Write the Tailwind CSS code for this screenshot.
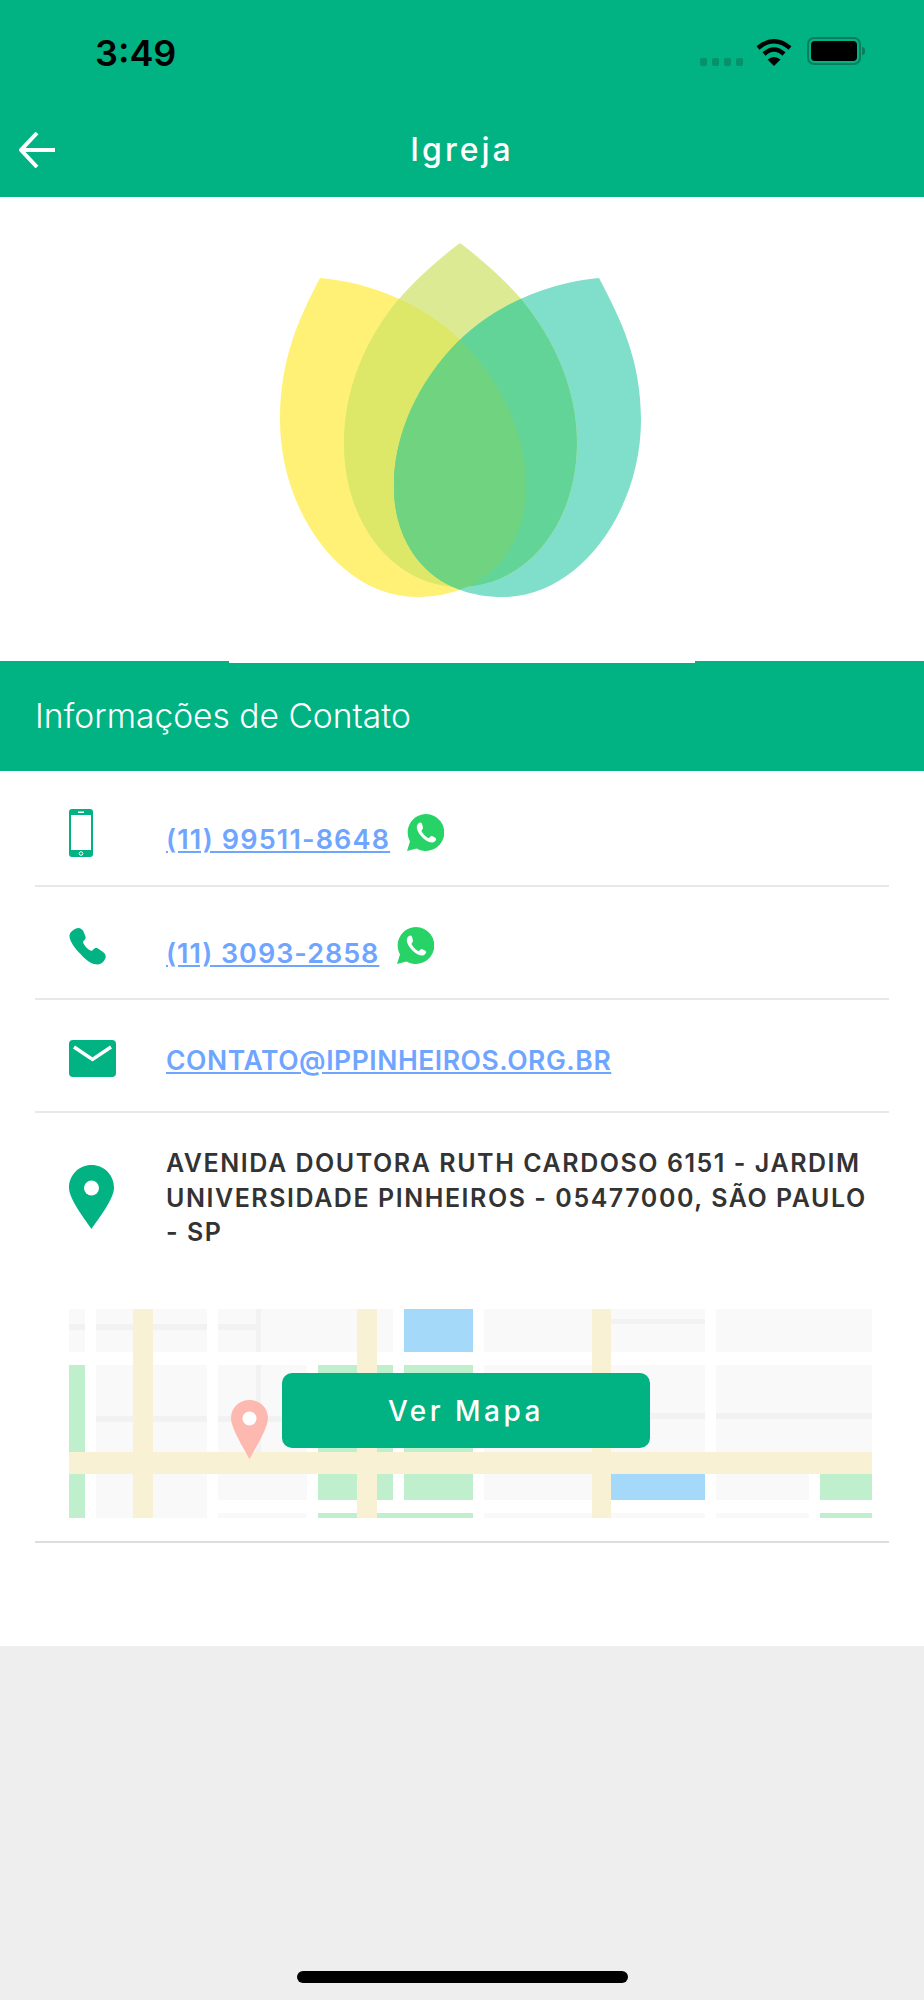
<!DOCTYPE html>
<html lang="pt-BR">
<head>
  <meta charset="UTF-8">
  <meta name="viewport" content="width=device-width, initial-scale=1.0">
  <title>Igreja</title>
  <script src="https://cdn.jsdelivr.net/npm/@tailwindcss/browser@4"></script>
</head>
<body class="bg-[#eeeeee]">
  <div class="w-[924px] h-[2000px] flex flex-col font-['Inter',sans-serif] bg-[#eeeeee]">

    <!-- status bar + header -->
    <header class="bg-[#01b383] h-[197px] flex flex-col shrink-0">
      <div class="h-[106px] flex justify-between pl-[95px] pr-[59px] pt-[31px]">
        <span class="text-[36px] leading-[44px] font-semibold text-black">3:49</span>
        <div class="flex items-start pt-[7px]">
          <div class="flex gap-[5px] mt-[20px] mr-[13px]">
            <i class="block w-[7px] h-[8px] rounded-[2px] bg-[#07916a]"></i>
            <i class="block w-[7px] h-[8px] rounded-[2px] bg-[#07916a]"></i>
            <i class="block w-[7px] h-[8px] rounded-[2px] bg-[#07916a]"></i>
            <i class="block w-[7px] h-[8px] rounded-[2px] bg-[#07916a]"></i>
          </div>
          <svg class="mr-[15px]" width="36" height="28" viewBox="0 0 36 28" fill="none">
            <path d="M2 10 Q18 -3.500 34 10" stroke="#000" stroke-width="4.500"/>
            <path d="M8 16 Q18 7 28 16" stroke="#000" stroke-width="4.500"/>
            <path d="M11.500 21.500 Q18 16.500 24.500 21.500 L18 28 Z" fill="#000"/>
          </svg>
          <div class="flex items-center -mt-[1px]">
            <div class="w-[54px] h-[28px] rounded-[7px] border-2 border-[#0a7d5f] p-[2px]">
              <div class="w-full h-full rounded-[4px] bg-black"></div>
            </div>
            <div class="w-[3px] h-[8px] ml-[1px] rounded-r-[3px] bg-[#0a7d5f]"></div>
          </div>
        </div>
      </div>
      <div class="flex items-center h-[88px] relative">
        <svg class="absolute left-[19px] top-[26px]" width="37" height="36" viewBox="0 0 37 36" fill="none">
          <path d="M36 18 H3 M18 1 L2 18 L18 35" stroke="#fff" stroke-width="4"/>
        </svg>
        <h1 class="w-full text-center text-white text-[32px] leading-[40px] font-medium tracking-[3px] -mt-[1px]">Igreja</h1>
      </div>
    </header>

    <!-- logo -->
    <section class="bg-white h-[464px] shrink-0 flex justify-center pt-[43px]">
      <svg width="380" height="370" viewBox="272 240 380 370">
        <defs>
          <path id="petalA" d="M320 278 C370 282 430 305 470 350 C510 395 527 445 526 490 C525 545 490 597 417 597 C340 597 280 510 280 420 C280 360 298 320 320 278 Z"/>
          <path id="petalB" d="M460 243 C480 258 505 280 522 300 C555 340 577 390 577 443 C577 525 525 587 460 587 C395 587 344 525 344 443 C344 390 365 340 398 300 C415 280 440 258 460 243 Z"/>
          <path id="petalC" d="M599 278 C550 282 490 305 450 350 C410 395 393 445 394 490 C395 545 430 597 503 597 C580 597 641 510 641 420 C641 360 621 320 599 278 Z"/>
          <clipPath id="clipA"><use href="#petalA"/></clipPath>
          <clipPath id="clipB"><use href="#petalB"/></clipPath>
        </defs>
        <use href="#petalA" fill="#fff176"/>
        <use href="#petalC" fill="#80dfca"/>
        <use href="#petalB" fill="#dcea93"/>
        <g clip-path="url(#clipA)"><use href="#petalB" fill="#dde768"/></g>
        <g clip-path="url(#clipB)"><use href="#petalC" fill="#63d498"/></g>
        <g clip-path="url(#clipA)"><use href="#petalC" fill="#6fd380"/></g>
      </svg>
    </section>

    <!-- section title -->
    <section class="relative bg-[#01b383] h-[110px] shrink-0 flex items-center pl-[35px]">
      <div class="absolute left-[229px] top-0 w-[466px] h-[2px] bg-white"></div>
      <h2 class="text-white text-[33.600px] leading-[40px] font-light">Informações de Contato</h2>
    </section>

    <!-- contact list -->
    <main class="bg-white h-[875px] shrink-0 px-[35px]">

      <div class="h-[116px] flex items-start border-b-2 border-[#e8e8e8] pl-[34px]">
        <div class="w-[97px] pt-[38px]">
          <svg width="24" height="48" viewBox="0 0 24 48">
            <rect width="24" height="48" rx="3" fill="#01b383"/>
            <rect x="2" y="6" width="20" height="35" fill="#fff"/>
            <rect x="9" y="2.500" width="6" height="1.500" fill="#fff"/>
            <circle cx="12" cy="44.500" r="1.800" fill="none" stroke="#fff"/>
          </svg>
        </div>
        <a href="#" class="mt-[53px] text-[#6fa5ff] text-[27px] leading-[32px] font-semibold tracking-[1.150px] underline">(11) 99511-8648</a>
        <svg class="ml-[17px] mt-[43px]" width="37" height="37" viewBox="0 0 37 37">
          <path d="M19 0 A18.500 18.500 0 1 1 9.500 34.500 L0 37 L3 27.500 A18.500 18.500 0 0 1 19 0 Z" fill="#27d366"/>
          <path d="M13 8.500 C11 9.500 9.500 11 9.800 14 C10.500 18 13.500 22 16.500 24.500 C20 27.500 24 29 26.500 28.200 C28.500 27.500 29.500 25.500 29 24.500 C28.500 23.500 25.500 22 24.500 22 C23.500 22 22.500 24 21.500 24 C19.500 23.500 15.500 19.500 14.500 17 C14.500 16 16 15 16 14 C16 13 15 9.500 14.500 9 C14 8.500 13.500 8.300 13 8.500 Z" fill="#fff"/>
        </svg>
      </div>

      <div class="h-[113px] flex items-start border-b-2 border-[#e8e8e8] pl-[34px]">
        <div class="w-[97px] pt-[40px]">
          <svg width="37" height="38" viewBox="0 0 37 37">
            <path d="M7 1 C10 -0.500 13 1 14.500 4 L16.500 9 C17 11 16 12.500 14.500 13.500 C14 14 14 15 14.500 16 C16 19 19 22 21.500 23 C22.500 23.500 23.500 23 24 22.500 C25.500 20.500 27 20 29 21 L34 24.500 C36.500 26 37.500 29 36 31.500 C34.500 34.500 32 37 28.500 37 C24 37 18 34 12 27 C5 20 1 14 0.500 9 C0.300 5.500 3 3 7 1 Z" fill="#01b383"/>
          </svg>
        </div>
        <a href="#" class="mt-[51px] text-[#6fa5ff] text-[27px] leading-[32px] font-semibold tracking-[0.970px] underline">(11) 3093-2858</a>
        <svg class="ml-[18px] mt-[40px]" width="37" height="37" viewBox="0 0 37 37">
          <path d="M19 0 A18.500 18.500 0 1 1 9.500 34.500 L0 37 L3 27.500 A18.500 18.500 0 0 1 19 0 Z" fill="#27d366"/>
          <path d="M13 8.500 C11 9.500 9.500 11 9.800 14 C10.500 18 13.500 22 16.500 24.500 C20 27.500 24 29 26.500 28.200 C28.500 27.500 29.500 25.500 29 24.500 C28.500 23.500 25.500 22 24.500 22 C23.500 22 22.500 24 21.500 24 C19.500 23.500 15.500 19.500 14.500 17 C14.500 16 16 15 16 14 C16 13 15 9.500 14.500 9 C14 8.500 13.500 8.300 13 8.500 Z" fill="#fff"/>
        </svg>
      </div>

      <div class="h-[113px] flex items-start border-b-2 border-[#e8e8e8] pl-[34px]">
        <div class="w-[97px] pt-[40px]">
          <svg width="47" height="37" viewBox="0 0 47 37">
            <rect width="47" height="37" rx="4" fill="#01b383"/>
            <path d="M5 7 L23.500 19.500 L42 7" fill="none" stroke="#fff" stroke-width="3.500"/>
          </svg>
        </div>
        <a href="#" class="mt-[44px] text-[#6fa5ff] text-[26.500px] leading-[32px] font-semibold tracking-[0.560px] underline">CONTATO@IPPINHEIROS.ORG.BR</a>
      </div>

      <div class="h-[430px] border-b-2 border-[#dddddd] flex flex-col">
        <div class="flex items-start pl-[34px] h-[196px]">
          <div class="w-[97px] shrink-0 pt-[52px]">
            <svg width="45" height="64" viewBox="0 0 45 64">
              <path d="M22.500 0 C35 0 45 10 45 22.500 C45 34 30 53 22.500 64 C15 53 0 34 0 22.500 C0 10 10 0 22.500 0 Z" fill="#01b383"/>
              <circle cx="22.500" cy="23" r="7.500" fill="#fff"/>
            </svg>
          </div>
          <p class="mt-[33px] pr-[8px] text-[#333333] text-[25px] leading-[34.500px] font-semibold tracking-[1.550px]">AVENIDA DOUTORA RUTH CARDOSO 6151 - JARDIM UNIVERSIDADE PINHEIROS - 05477000, SÃO PAULO - SP</p>
        </div>

        <!-- map preview -->
        <div class="relative ml-[34px] w-[803px] h-[209px]">
          <svg class="block" width="803" height="209" viewBox="69 1309 803 209">
            <g fill="#f9f9f9">
              <rect x="69" y="1309" width="16" height="43"/>
              <rect x="96" y="1309" width="111" height="43"/>
              <rect x="218" y="1309" width="175" height="43"/>
              <rect x="484" y="1309" width="221" height="43"/>
              <rect x="716" y="1309" width="156" height="43"/>
              <rect x="96" y="1365" width="111" height="87"/>
              <rect x="218" y="1365" width="89" height="87"/>
              <rect x="484" y="1365" width="221" height="87"/>
              <rect x="716" y="1365" width="156" height="87"/>
              <rect x="96" y="1474" width="111" height="44"/>
              <rect x="218" y="1474" width="89" height="26"/>
              <rect x="484" y="1474" width="108" height="26"/>
              <rect x="716" y="1474" width="93" height="26"/>
              <rect x="218" y="1513" width="89" height="5"/>
              <rect x="484" y="1513" width="221" height="5"/>
              <rect x="716" y="1513" width="93" height="5"/>
            </g>
            <g fill="#f2f2f2">
              <rect x="69" y="1324" width="16" height="6"/>
              <rect x="96" y="1324" width="111" height="6"/>
              <rect x="218" y="1324" width="38" height="6"/>
              <rect x="256" y="1309" width="5" height="43"/>
              <rect x="256" y="1365" width="5" height="87"/>
              <rect x="96" y="1416" width="111" height="6"/>
              <rect x="218" y="1416" width="89" height="6"/>
              <rect x="611" y="1319" width="94" height="5"/>
              <rect x="611" y="1413" width="94" height="6"/>
              <rect x="716" y="1413" width="156" height="6"/>
            </g>
            <g fill="#bfefcd">
              <rect x="69" y="1365" width="16" height="153"/>
              <rect x="318" y="1365" width="75" height="135"/>
              <rect x="404" y="1365" width="69" height="135"/>
              <rect x="318" y="1513" width="155" height="5"/>
              <rect x="820" y="1474" width="52" height="26"/>
              <rect x="820" y="1513" width="52" height="5"/>
            </g>
            <g fill="#a5d9f9">
              <rect x="404" y="1309" width="69" height="43"/>
              <rect x="611" y="1474" width="94" height="26"/>
            </g>
            <g fill="#f9f1d4">
              <rect x="133" y="1309" width="20" height="209"/>
              <rect x="357" y="1309" width="20" height="209"/>
              <rect x="592" y="1309" width="19" height="209"/>
              <rect x="69" y="1452" width="803" height="22"/>
            </g>
            <path d="M249.500 1400 C260 1400 268 1408 268 1418 C268 1428 256 1447 249.500 1459 C243 1447 231 1428 231 1418 C231 1408 239 1400 249.500 1400 Z" fill="#fdb9af"/>
            <circle cx="249.500" cy="1418.500" r="7" fill="#fff"/>
          </svg>
          <button class="absolute left-[213px] top-[64px] w-[368px] h-[75px] rounded-[10px] bg-[#01b383] text-white text-[28px] font-medium tracking-[3.500px]">Ver Mapa</button>
        </div>
      </div>
    </main>

    <!-- home indicator -->
    <div class="flex-1 flex flex-col justify-end items-center pb-[17px]">
      <div class="w-[331px] h-[12px] rounded-full bg-black"></div>
    </div>
  </div>
</body>
</html>
